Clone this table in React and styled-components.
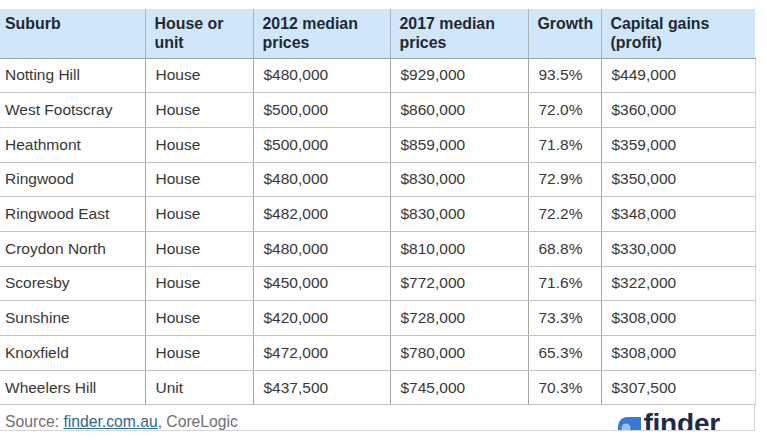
import React from "react";
import styled, { createGlobalStyle } from "styled-components";

const GlobalStyle = createGlobalStyle`
  html, body {
    margin: 0;
    padding: 0;
    background: #ffffff;
  }
  body {
    font-family: "Liberation Sans", Arial, sans-serif;
  }
`;

const Page = styled.div`
  width: 767px;
  height: 440px;
  overflow: hidden;
  padding-top: 9px;
  box-sizing: border-box;
  background: #ffffff;
`;

const Frame = styled.div`
  width: 760px;
  margin-left: -5px;
`;

const Table = styled.table`
  width: 760px;
  border-collapse: collapse;
  table-layout: fixed;
  font-family: "Liberation Sans", Arial, sans-serif;
`;

const HeadRow = styled.tr`
  height: 49px;
  background: #d1e7f9;
`;

const HeadCell = styled.th`
  text-align: left;
  vertical-align: top;
  font-size: 15.9px;
  line-height: 19px;
  font-weight: bold;
  color: #1d2a36;
  padding: 5px 9px 0 9px;
  border-left: 1px solid #a9b4bd;
  border-bottom: 1px solid #9aa3aa;
  &:first-child {
    border-left: none;
    padding-left: 10px;
  }
`;

const Row = styled.tr`
  height: 34.7px;
`;

const Cell = styled.td`
  font-size: 15.5px;
  color: #383838;
  padding: 0 10px;
  vertical-align: middle;
  white-space: nowrap;
  border-left: 1px solid #a6a6a6;
  border-bottom: 1px solid #c4c4c4;
  &:first-child {
    border-left: none;
  }
  &:last-child {
    border-right: 1px solid #d0d0d0;
  }
`;

const Footer = styled.div`
  height: 25px;
  display: flex;
  justify-content: space-between;
  align-items: flex-start;
  overflow: hidden;
  border-bottom: 1px solid #d6d6d6;
  border-right: 1px solid #d6d6d6;
  width: 759px;
`;

const Source = styled.div`
  padding: 8px 0 0 10px;
  font-size: 15.7px;
  line-height: 17px;
  color: #707070;
`;

const SourceLink = styled.a`
  color: #2b6a8f;
  text-decoration: underline;
`;

const Logo = styled.div`
  display: flex;
  align-items: flex-start;
  gap: 1px;
  margin-right: 34px;
  padding-top: 5px;
`;

const LogoText = styled.span`
  font-family: "Liberation Sans", Arial, sans-serif;
  font-size: 28px;
  line-height: 28px;
  font-weight: bold;
  color: #1b2b4b;
  letter-spacing: -0.2px;
`;

const rows = [
  ["Notting Hill", "House", "$480,000", "$929,000", "93.5%", "$449,000"],
  ["West Footscray", "House", "$500,000", "$860,000", "72.0%", "$360,000"],
  ["Heathmont", "House", "$500,000", "$859,000", "71.8%", "$359,000"],
  ["Ringwood", "House", "$480,000", "$830,000", "72.9%", "$350,000"],
  ["Ringwood East", "House", "$482,000", "$830,000", "72.2%", "$348,000"],
  ["Croydon North", "House", "$480,000", "$810,000", "68.8%", "$330,000"],
  ["Scoresby", "House", "$450,000", "$772,000", "71.6%", "$322,000"],
  ["Sunshine", "House", "$420,000", "$728,000", "73.3%", "$308,000"],
  ["Knoxfield", "House", "$472,000", "$780,000", "65.3%", "$308,000"],
  ["Wheelers Hill", "Unit", "$437,500", "$745,000", "70.3%", "$307,500"],
];

const widths = [150, 108, 137, 138, 73, 154];

// finder mark: blue tab with a rounded top-left corner and a pale dot
const FinderIcon = () => (
  <svg width="25" height="26" viewBox="0 0 25 26">
    <path d="M11 7 L24 7 L24 26 L1 26 L1 17 C1 11 5 7 11 7 Z" fill="#3a78d6" />
    <circle cx="9" cy="18" r="4.5" fill="#9cc0f0" />
  </svg>
);

const App = () => {
  return (
    <Page>
      <GlobalStyle />
      <Frame>
        <Table>
          <colgroup>
            {widths.map((w, i) => (
              <col key={i} style={{ width: w }} />
            ))}
          </colgroup>
          <thead>
            <HeadRow>
              <HeadCell>Suburb</HeadCell>
              <HeadCell>House or<br />unit</HeadCell>
              <HeadCell>2012 median<br />prices</HeadCell>
              <HeadCell>2017 median<br />prices</HeadCell>
              <HeadCell>Growth</HeadCell>
              <HeadCell>Capital gains<br />(profit)</HeadCell>
            </HeadRow>
          </thead>
          <tbody>
            {rows.map((r) => (
              <Row key={r[0]}>
                {r.map((c, i) => (
                  <Cell key={i}>{c}</Cell>
                ))}
              </Row>
            ))}
          </tbody>
        </Table>
        <Footer>
          <Source>
            Source: <SourceLink href="#">finder.com.au</SourceLink>, CoreLogic
          </Source>
          <Logo>
            <FinderIcon />
            <LogoText>finder</LogoText>
          </Logo>
        </Footer>
      </Frame>
    </Page>
  );
};

export default App;
